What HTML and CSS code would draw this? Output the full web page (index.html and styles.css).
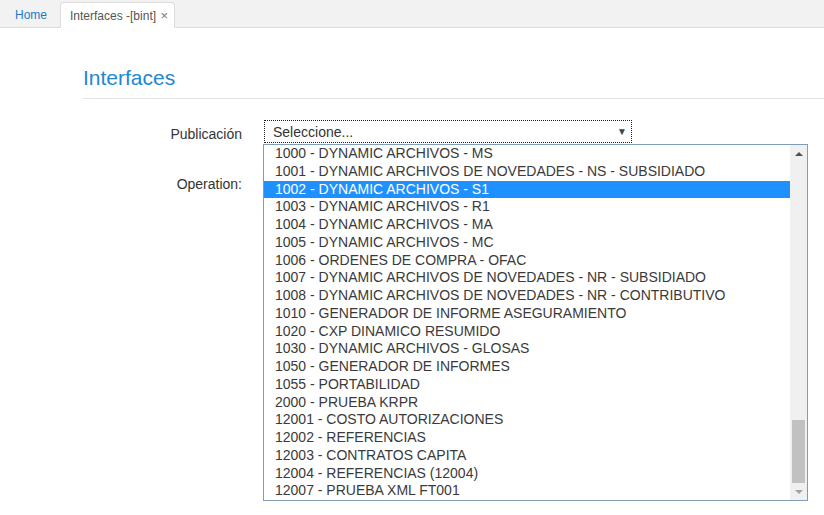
FILE: index.html
```html
<!DOCTYPE html>
<html lang="es">
<head>
<meta charset="utf-8">
<title>Interfaces</title>
<link rel="stylesheet" href="styles.css">
</head>
<body>
<div class="tabs">
  <div class="tab">Home</div>
  <div class="tab active">Interfaces -[bint] <span class="close">×</span></div>
</div>
<div class="content">
  <h1 class="title">Interfaces</h1>
  <div class="form">
    <div class="row">
      <label class="label">Publicación</label>
      <div class="select-wrap">
        <div class="select"><span>Seleccione...</span><span class="arrow">▼</span></div>
        <div class="dropdown">
          <ul class="options">
            <li>1000 - DYNAMIC ARCHIVOS - MS</li>
            <li>1001 - DYNAMIC ARCHIVOS DE NOVEDADES - NS - SUBSIDIADO</li>
            <li class="selected">1002 - DYNAMIC ARCHIVOS - S1</li>
            <li>1003 - DYNAMIC ARCHIVOS - R1</li>
            <li>1004 - DYNAMIC ARCHIVOS - MA</li>
            <li>1005 - DYNAMIC ARCHIVOS - MC</li>
            <li>1006 - ORDENES DE COMPRA - OFAC</li>
            <li>1007 - DYNAMIC ARCHIVOS DE NOVEDADES - NR - SUBSIDIADO</li>
            <li>1008 - DYNAMIC ARCHIVOS DE NOVEDADES - NR - CONTRIBUTIVO</li>
            <li>1010 - GENERADOR DE INFORME ASEGURAMIENTO</li>
            <li>1020 - CXP DINAMICO RESUMIDO</li>
            <li>1030 - DYNAMIC ARCHIVOS - GLOSAS</li>
            <li>1050 - GENERADOR DE INFORMES</li>
            <li>1055 - PORTABILIDAD</li>
            <li>2000 - PRUEBA KRPR</li>
            <li>12001 - COSTO AUTORIZACIONES</li>
            <li>12002 - REFERENCIAS</li>
            <li>12003 - CONTRATOS CAPITA</li>
            <li>12004 - REFERENCIAS (12004)</li>
            <li>12007 - PRUEBA XML FT001</li>
          </ul>
          <div class="scrollbar">
            <div class="sb-btn up"></div>
            <div class="sb-track"><div class="sb-thumb"></div></div>
            <div class="sb-btn down"></div>
          </div>
        </div>
      </div>
    </div>
    <div class="row">
      <label class="label">Operation:</label>
      <div class="select-wrap"></div>
    </div>
  </div>
</div>
</body>
</html>
```

FILE: styles.css
```css
* { box-sizing: border-box; }
html, body { margin: 0; padding: 0; background: #fff; }
body {
  font-family: "Liberation Sans", Arial, sans-serif;
  color: #333;
  width: 824px;
  height: 515px;
  overflow: hidden;
}
.tabs {
  display: flex;
  align-items: flex-end;
  height: 28px;
  background: #f2f2f2;
  border-bottom: 1px solid #dcdcdc;
  padding-left: 4px;
}
.tab {
  font-size: 12px;
  color: #1b7bc4;
  padding: 0 11px;
  height: 26px;
  line-height: 27px;
  margin-bottom: -1px;
}
.tab.active {
  margin-left: 2px;
  background: #fff;
  color: #555;
  border: 1px solid #dcdcdc;
  border-bottom-color: #fff;
  border-radius: 4px 4px 0 0;
  padding: 0 6px 0 9px;
  width: 115px;
  line-height: 25px;
}
.close { color: #777; font-size: 13px; margin-left: 1px; }
.content { padding: 0 0 0 83px; }
.title {
  margin: 38px 0 0 0;
  font-size: 21px;
  font-weight: normal;
  line-height: 24px;
  color: #1d87cf;
  padding-bottom: 8px;
  border-bottom: 1px solid #e3e3e3;
}
.form { padding-top: 21px; }
.row {
  display: flex;
  align-items: flex-start;
  gap: 22px;
  margin-bottom: 18px;
  height: 23px;
}
.label {
  width: 159px;
  text-align: right;
  font-size: 14px;
  line-height: 23px;
  padding-top: 3px;
  color: #333;
}
.row + .row .label { padding-top: 0; line-height: 46px; }
.select-wrap { position: relative; width: 368px; }
.select {
  display: flex;
  justify-content: space-between;
  align-items: center;
  height: 23px;
  border: 1px dotted #222;
  padding: 0 4px 0 8px;
  font-size: 14px;
  color: #333;
  background: #fff;
}
.arrow { font-size: 10px; color: #444; }
.dropdown {
  position: absolute;
  left: -1px;
  top: 24px;
  width: 545px;
  height: 357px;
  border: 1px solid #7f9db9;
  background: #fff;
  display: flex;
  z-index: 5;
}
.options {
  list-style: none;
  margin: 0;
  padding: 0;
  flex: 1;
}
.options li {
  height: 17.75px;
  line-height: 17.75px;
  font-size: 14px;
  color: #3a3a3a;
  padding-left: 11px;
  white-space: nowrap;
}
.options li.selected { background: #1e90ff; color: #fff; }
.scrollbar {
  width: 17px;
  background: #f0f0f0;
  display: flex;
  flex-direction: column;
}
.sb-btn {
  height: 17px;
  display: flex;
  align-items: center;
  justify-content: center;
}
.sb-btn::after {
  content: "";
  width: 0; height: 0;
  border-left: 4px solid transparent;
  border-right: 4px solid transparent;
}
.sb-btn.up::after { border-bottom: 4px solid #505050; }
.sb-btn.down::after { border-top: 4px solid #a3a3a3; }
.sb-track {
  flex: 1;
  display: flex;
  flex-direction: column;
  justify-content: flex-end;
  padding: 0 2px;
}
.sb-thumb {
  height: 63px;
  background: #c1c1c1;
}
```
